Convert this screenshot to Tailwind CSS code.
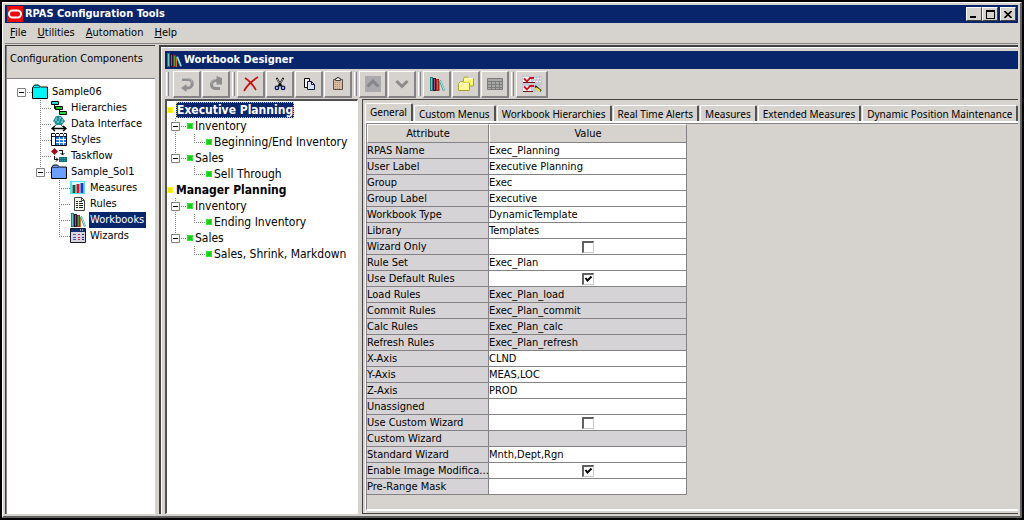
<!DOCTYPE html>
<html lang="en">
<head>
<meta charset="utf-8">
<title>RPAS Configuration Tools</title>
<script src="https://cdn.jsdelivr.net/npm/@tailwindcss/browser@4"></script>
</head>
<body class="bg-black font-['DejaVu_Sans_Condensed','DejaVu_Sans',sans-serif] text-[11px] leading-4 text-black">

<!-- Shared icons -->
<svg class="hidden" aria-hidden="true">
  <defs>
    <symbol id="t-line" viewBox="0 0 19 16"><path d="M8.5 0v16" stroke="#808080" stroke-dasharray="1 1"/></symbol>
    <symbol id="t-tee" viewBox="0 0 19 16"><path d="M8.5 0v16M8 8.5h11" stroke="#808080" stroke-dasharray="1 1" fill="none"/></symbol>
    <symbol id="t-end" viewBox="0 0 19 16"><path d="M8.5 0v8M8 8.5h11" stroke="#808080" stroke-dasharray="1 1" fill="none"/></symbol>
    <symbol id="t-box" viewBox="0 0 19 16"><path d="M4.5 4.5h8v8h-8z" fill="#fff" stroke="#808080"/><path d="M6 8.5h5" stroke="#000"/><path d="M14 8.5h5" stroke="#808080" stroke-dasharray="1 1"/></symbol>
    <symbol id="t-box-end" viewBox="0 0 19 16"><path d="M8.5 0v4" stroke="#808080" stroke-dasharray="1 1"/><path d="M4.5 4.5h8v8h-8z" fill="#fff" stroke="#808080"/><path d="M6 8.5h5" stroke="#000"/><path d="M14 8.5h5" stroke="#808080" stroke-dasharray="1 1"/></symbol>
    <symbol id="t-box-mid" viewBox="0 0 19 16"><path d="M8.5 0v16" stroke="#808080" stroke-dasharray="1 1"/><path d="M4.5 4.5h8v8h-8z" fill="#fff" stroke="#808080"/><path d="M6 8.5h5" stroke="#000"/><path d="M14 8.5h5" stroke="#808080" stroke-dasharray="1 1"/></symbol>
    <symbol id="n-green" viewBox="0 0 9 16"><path d="M1 5h6v6H1z" fill="#2cf02c"/><path d="M2 6h4v4H2z" fill="#1cc81c"/></symbol>
    <symbol id="n-yellow" viewBox="0 0 9 16"><path d="M0 5h6v6H0z" fill="#ffff30"/><path d="M1 6h4v4H1z" fill="#f0e800"/></symbol>
    <symbol id="i-books" viewBox="0 0 16 16">
      <path d="M1 1h3v14H1z" fill="#1f7f70"/><path d="M2 2h1v12H2z" fill="#5fd0b0"/>
      <path d="M4 2h3v13H4z" fill="#301040"/><path d="M5 3h1v11H5z" fill="#b040a0"/>
      <path d="M7 3h3v12H7z" fill="#a02818"/><path d="M8 4h1v10H8z" fill="#60a030"/>
      <path d="M10 5h1v10h-1z" fill="#e07030"/>
      <path d="M10 5l2-1 4 10-2 1z" fill="#3f9fa8"/><path d="M11.5 5l3.5 9" stroke="#b0f0e8"/>
    </symbol>
    <symbol id="i-folder-cyan" viewBox="0 0 16 16"><path d="M.5 14.500V3.500L2.500 1h4l2 2h7v11.500z" fill="#00f4f8" stroke="#000"/><path d="M1 3.500h7" stroke="#08777c"/></symbol>
    <symbol id="i-folder-blue" viewBox="0 0 16 16"><path d="M.5 14.500V3.500L2.500 1h4l2 2h7v11.500z" fill="#6ca0fc" stroke="#000"/><path d="M1 3.500h7" stroke="#28487c"/></symbol>
    <symbol id="i-hier" viewBox="0 0 16 16"><path d="M3.500 5v3.500H6M8.500 9v4H10" stroke="#000" fill="none"/><path d="M.5 1.500h7v3h-7z" fill="#30d8d8" stroke="#000"/><path d="M4.500 6.500h7v3h-7z" fill="#18c828" stroke="#000"/><path d="M8.500 11.500h7v3h-7z" fill="#20e030" stroke="#000"/></symbol>
    <symbol id="i-data" viewBox="0 0 16 16"><path d="M5 0h5l4 5-3 4H5L2 5z" fill="#208c98"/><path d="M5 2h1M8 2h2M4 4h2M8 4h1M11 4h1M3 6h1M6 6h2M10 6h2" stroke="#b0ecec"/><path d="M5 9l-3 3M10 9l3 3" stroke="#606060"/><path d="M1 12.500h14M4 10l-3 2.500L4 15M12 10l3 2.500L12 15" stroke="#000" fill="none" stroke-width="1.400"/></symbol>
    <symbol id="i-styles" viewBox="0 0 16 16"><path d="M.5 1.500h15v12H.5z" fill="#fff" stroke="#000"/><path d="M4 5h11v8H4z" fill="#2878e0"/><path d="M4.500 1v12M8.500 1v12M12.500 1v12M1 4.500h14M4 7.500h11M4 10.500h11" stroke="#fff"/><path d="M1 4.500h14M4.500 2v11" stroke="#101840"/><path d="M8.500 2v3M12.500 2v3" stroke="#555"/></symbol>
    <symbol id="i-task" viewBox="0 0 16 16"><path d="M3.500 0L7 3.500 3.500 7 0 3.500z" fill="#981018"/><path d="M8 2.500h3.500V7M9.500 5l2 2 2-2M3.500 8v3.500H7M5 9.500l2 2-2 2" stroke="#000" fill="none"/><path d="M8 9h8v5H8z" fill="#107078"/><path d="M9 10.500h6M9 12.500h6" stroke="#30a0a0" stroke-dasharray="1 1"/></symbol>
    <symbol id="i-meas" viewBox="0 0 16 16"><path d="M0 1h15v13H0z" fill="#58e0f0"/><path d="M2 2h12v11H2z" fill="#d8fcff"/><path d="M2.500 5h3v8h-3z" fill="#086048"/><path d="M6.500 4h3v9h-3z" fill="#c81828"/><path d="M10.500 3h3v10h-3z" fill="#2038c8"/></symbol>
    <symbol id="i-rules" viewBox="0 0 16 16"><path d="M4.500 1.500h7l3 3v10h-10z" fill="#f4f4ec" stroke="#444"/><path d="M11.500 1.500v3h3" fill="none" stroke="#444"/><path d="M6 5.500h2M9 5.500h3M6 7.500h2M9 7.500h4M6 9.500h2M9 9.500h4M6 11.500h2M9 11.500h4" stroke="#222"/></symbol>
    <symbol id="i-wiz" viewBox="0 0 16 16"><path d="M.5.500h15v14H.5z" fill="#d8d4e0" stroke="#181828"/><path d="M1 1h14v3H1z" fill="#103070"/><path d="M10 2h1M12 2h1" stroke="#fff"/><path d="M3 6.500h3M3 9.500h3M3 11.500h3" stroke="#4858c0"/><path d="M8 6.500h2M8 9.500h2M8 11.500h2" stroke="#b83050"/><path d="M12 6.500h2M12 9.500h2M12 11.500h2" stroke="#202080"/></symbol>
    <symbol id="i-undo" viewBox="0 0 16 16"><path d="M3 3.500h6a4 4 0 0 1 0 8.500H7" fill="none" stroke="#8f8f8f" stroke-width="3"/><path d="M7.500 8v8L2 12z" fill="#8f8f8f"/><path d="M3 2.500h6a4 4 0 0 1 4 4" fill="none" stroke="#b4b4b4"/></symbol>
    <symbol id="i-redo" viewBox="0 0 16 16"><path d="M10 4.500H7.500a4 4 0 0 0 0 8H12" fill="none" stroke="#8f8f8f" stroke-width="3"/><path d="M8.500 0v8.500H14V2z" fill="#8f8f8f"/><path d="M8 3.500a4 4 0 0 0-4.500 4" fill="none" stroke="#b4b4b4"/></symbol>
    <symbol id="i-del" viewBox="0 0 16 16"><path d="M2 2c5 3 8 7 11 12M15 1C9 5 4 9 1 15" fill="none" stroke="#c81010" stroke-width="1.700"/></symbol>
    <symbol id="i-cut" viewBox="0 0 16 16"><path d="M4 1l6 10M12 1L6 11" stroke="#000" stroke-width="2.200"/><path d="M4.500 2l3 5M11.500 2l-3 5" stroke="#fff" stroke-width=".8"/><circle cx="4.500" cy="12.500" r="2" fill="#b8bce8" stroke="#101858" stroke-width="1.500"/><circle cx="11.500" cy="12.500" r="2" fill="#b8bce8" stroke="#101858" stroke-width="1.500"/></symbol>
    <symbol id="i-copy" viewBox="0 0 16 16"><path d="M3.500 2.500h5v9h-5z" fill="#f4f4f8" stroke="#000"/><path d="M6.500 5.500h4l3 3v5h-7z" fill="#dce0f4" stroke="#101840"/><path d="M10.500 5.500v3h3" fill="none" stroke="#101840"/></symbol>
    <symbol id="i-paste" viewBox="0 0 16 16"><path d="M3.500 3.500h9v10h-9z" fill="#d8b8a0" stroke="#5c504c"/><path d="M5 6.500h6M5 8.500h6M5 10.500h6M5 12.500h6" stroke="#b09898" stroke-dasharray="1 1"/><path d="M5.500 4.500v-2h1.500v-1h2v1h1.500v2z" fill="#f0f0f0" stroke="#444"/></symbol>
    <symbol id="i-up" viewBox="0 0 16 16"><path d="M0 0h16v16H0z" fill="#aaaaae"/><path d="M2.500 10.500L8 5l5.500 5.500" fill="none" stroke="#868688" stroke-width="3"/></symbol>
    <symbol id="i-down" viewBox="0 0 16 16"><path d="M2.500 5L8 10.500 13.500 5" fill="none" stroke="#8c8c8c" stroke-width="3"/></symbol>
    <symbol id="i-folders" viewBox="0 0 16 16"><path d="M5.500 8V2.500l1-1.500h3l1 1.500h5V10h-10z" fill="#fff870" stroke="#b0a030"/><path d="M.5 14.500V7.500l2-2h3l1 1.500h5v7.500z" fill="#ffff98" stroke="#b0a030"/><path d="M6 4.500l3-2h6M1 9l3-1.500h7" fill="none" stroke="#ffffe0"/></symbol>
    <symbol id="i-grid" viewBox="0 0 16 16"><path d="M.5 2.500h15v11H.5z" fill="#a8a8a8" stroke="#7c7c7c"/><path d="M1 5.500h14M1 8.500h14M1 11.500h14M4.500 5v8M8.500 5v8M12.500 5v8" stroke="#7c7c7c"/></symbol>
    <symbol id="i-check" viewBox="0 0 20 16"><path d="M0 0h20v16H0z" fill="#c8c8d4"/><path d="M1 1h8v5H1zM1 10h8v5H1z" fill="#f4f4f4"/><path d="M12 2.500h7M11 5.500h8M11 10.500h3" stroke="#f4f4f4" stroke-dasharray="2 1"/><path d="M2 2.500l3 3 3-3.500 4 0M2 10.500l3 3 3-3.500 4 0" fill="none" stroke="#d01020" stroke-width="1.800"/><path d="M1 6.500h12M1 15.500h10" stroke="#701018"/><path d="M13 10l6 5" stroke="#202020" stroke-width="2"/><path d="M14 12l4 3" stroke="#f0e800" stroke-width="2"/></symbol>
  </defs>
</svg>

<div class="flex min-h-screen flex-col p-0.5">
<div class="flex grow flex-col border-t border-r-2 border-b-2 border-l border-t-white border-r-[#606060] border-b-[#606060] border-l-white bg-[#d6d3ce] p-0.5">

  <!-- Title bar -->
  <header class="flex h-[18px] items-center bg-[#08246b] pr-0.5 pl-0.5 text-white">
    <svg class="size-4" viewBox="0 0 16 16" aria-hidden="true"><path d="M0 0h16v16H0z" fill="#f00808"/><rect x="2" y="4.500" width="12" height="7" rx="3.500" fill="none" stroke="#fff" stroke-width="2"/></svg>
    <h1 class="ml-0.5 grow font-bold">RPAS Configuration Tools</h1>
    <div class="flex">
      <button aria-label="Minimize" class="flex h-3.5 w-4 items-end justify-start border border-t-white border-r-[#404040] border-b-[#404040] border-l-white bg-[#d6d3ce] pb-0.5 pl-[3px]"><span class="h-0.5 w-1.5 bg-black"></span></button>
      <button aria-label="Maximize" class="flex h-3.5 w-4 items-center justify-center border border-t-white border-r-[#404040] border-b-[#404040] border-l-white bg-[#d6d3ce]"><span class="h-[9px] w-[9px] border border-t-2 border-black"></span></button>
      <button aria-label="Close" class="ml-0.5 flex h-3.5 w-4 items-center justify-center border border-t-white border-r-[#404040] border-b-[#404040] border-l-white bg-[#d6d3ce]"><svg class="h-[7px] w-2" viewBox="0 0 8 7"><path d="M.5 0l7 7M7.500 0l-7 7" stroke="#000" stroke-width="1.600"/></svg></button>
    </div>
  </header>

  <!-- Menu bar -->
  <nav class="flex h-[21px] items-center gap-[11px] border-b border-[#848284] pl-[5px]">
    <button><u>F</u>ile</button>
    <button><u>U</u>tilities</button>
    <button><u>A</u>utomation</button>
    <button><u>H</u>elp</button>
  </nav>

  <div class="flex grow pt-px">
    <!-- Component tree -->
    <aside class="flex w-[150px] shrink-0 flex-col border-t border-l border-[#424142]">
      <h2 class="h-8 border-l border-[#848284] pt-[5px] pl-[3px] whitespace-nowrap">Configuration Components</h2>
      <ul class="grow border-t border-l border-[#848284] bg-white pt-[5px] pl-1.5">
        <li>
          <div class="flex h-4 items-center"><button aria-label="Collapse Sample06"><svg class="block h-4 w-[19px]"><use href="#t-box"/></svg></button><svg class="size-4"><use href="#i-folder-cyan"/></svg><span class="ml-[3px] px-px">Sample06</span></div>
          <ul>
            <li class="flex h-4 items-center pl-[19px]"><svg class="h-4 w-[19px]"><use href="#t-tee"/></svg><svg class="size-4"><use href="#i-hier"/></svg><span class="ml-[3px] px-px">Hierarchies</span></li>
            <li class="flex h-4 items-center pl-[19px]"><svg class="h-4 w-[19px]"><use href="#t-tee"/></svg><svg class="size-4"><use href="#i-data"/></svg><span class="ml-[3px] px-px whitespace-nowrap">Data Interface</span></li>
            <li class="flex h-4 items-center pl-[19px]"><svg class="h-4 w-[19px]"><use href="#t-tee"/></svg><svg class="size-4"><use href="#i-styles"/></svg><span class="ml-[3px] px-px">Styles</span></li>
            <li class="flex h-4 items-center pl-[19px]"><svg class="h-4 w-[19px]"><use href="#t-tee"/></svg><svg class="size-4"><use href="#i-task"/></svg><span class="ml-[3px] px-px">Taskflow</span></li>
            <li>
              <div class="flex h-4 items-center pl-[19px]"><button aria-label="Collapse Sample_Sol1"><svg class="block h-4 w-[19px]"><use href="#t-box-end"/></svg></button><svg class="size-4"><use href="#i-folder-blue"/></svg><span class="ml-[3px] px-px">Sample_Sol1</span></div>
              <ul>
                <li class="flex h-4 items-center pl-[38px]"><svg class="h-4 w-[19px]"><use href="#t-tee"/></svg><svg class="size-4"><use href="#i-meas"/></svg><span class="ml-[3px] px-px">Measures</span></li>
                <li class="flex h-4 items-center pl-[38px]"><svg class="h-4 w-[19px]"><use href="#t-tee"/></svg><svg class="size-4"><use href="#i-rules"/></svg><span class="ml-[3px] px-px">Rules</span></li>
                <li class="flex h-4 items-center pl-[38px]"><svg class="h-4 w-[19px]"><use href="#t-tee"/></svg><svg class="size-4"><use href="#i-books"/></svg><span class="ml-[3px] bg-[#08246b] pr-0.5 pl-px text-white">Workbooks</span></li>
                <li class="flex h-4 items-center pl-[38px]"><svg class="h-4 w-[19px]"><use href="#t-end"/></svg><svg class="size-4"><use href="#i-wiz"/></svg><span class="ml-[3px] px-px">Wizards</span></li>
              </ul>
            </li>
          </ul>
        </li>
      </ul>
    </aside>

    <!-- Workbook designer -->
    <main class="ml-1 flex min-w-0 grow flex-col border-t-2 border-l-2 border-[#424142]">
      <div class="flex grow flex-col border-t border-l border-white pt-[3px] pl-[3px]">
        <div class="flex h-[18px] shrink-0 items-center bg-[#08246b] pl-px text-white">
          <svg class="size-4" aria-hidden="true"><use href="#i-books"/></svg>
          <h2 class="ml-0.5 font-bold">Workbook Designer</h2>
        </div>

        <div class="flex h-[30px] shrink-0 items-center gap-px" role="toolbar">
          <span class="mr-[3px] ml-px h-6 w-[3px] border-r border-l border-r-[#848284] border-l-white"></span>
          <button aria-label="Undo" disabled class="flex h-[27px] w-7 items-center justify-center border-t border-r-2 border-b-2 border-l border-t-white border-r-[#848284] border-b-[#848284] border-l-white"><svg class="size-4"><use href="#i-undo"/></svg></button>
          <button aria-label="Redo" disabled class="flex h-[27px] w-7 items-center justify-center border-t border-r-2 border-b-2 border-l border-t-white border-r-[#848284] border-b-[#848284] border-l-white"><svg class="size-4"><use href="#i-redo"/></svg></button>
          <span class="mx-px h-6 w-[3px] border-r border-l border-r-[#848284] border-l-white"></span>
          <button aria-label="Delete" class="flex h-[27px] w-7 items-center justify-center border-t border-r-2 border-b-2 border-l border-t-white border-r-[#848284] border-b-[#848284] border-l-white"><svg class="size-4"><use href="#i-del"/></svg></button>
          <button aria-label="Cut" class="flex h-[27px] w-7 items-center justify-center border-t border-r-2 border-b-2 border-l border-t-white border-r-[#848284] border-b-[#848284] border-l-white"><svg class="size-3.5"><use href="#i-cut"/></svg></button>
          <button aria-label="Copy" class="flex h-[27px] w-7 items-center justify-center border-t border-r-2 border-b-2 border-l border-t-white border-r-[#848284] border-b-[#848284] border-l-white"><svg class="size-4"><use href="#i-copy"/></svg></button>
          <button aria-label="Paste" class="flex h-[27px] w-7 items-center justify-center border-t border-r-2 border-b-2 border-l border-t-white border-r-[#848284] border-b-[#848284] border-l-white"><svg class="size-4"><use href="#i-paste"/></svg></button>
          <span class="mx-px h-6 w-[3px] border-r border-l border-r-[#848284] border-l-white"></span>
          <button aria-label="Move up" disabled class="flex h-[27px] w-7 items-center justify-center border-t border-r-2 border-b-2 border-l border-t-white border-r-[#848284] border-b-[#848284] border-l-white"><svg class="size-4"><use href="#i-up"/></svg></button>
          <button aria-label="Move down" disabled class="flex h-[27px] w-7 items-center justify-center border-t border-r-2 border-b-2 border-l border-t-white border-r-[#848284] border-b-[#848284] border-l-white"><svg class="size-4"><use href="#i-down"/></svg></button>
          <span class="mx-px h-6 w-[3px] border-r border-l border-r-[#848284] border-l-white"></span>
          <button aria-label="New workbook" class="flex h-[27px] w-7 items-center justify-center border-t border-r-2 border-b-2 border-l border-t-white border-r-[#848284] border-b-[#848284] border-l-white"><svg class="size-4"><use href="#i-books"/></svg></button>
          <button aria-label="New tab" class="flex h-[27px] w-7 items-center justify-center border-t border-r-2 border-b-2 border-l border-t-white border-r-[#848284] border-b-[#848284] border-l-white"><svg class="size-4"><use href="#i-folders"/></svg></button>
          <button aria-label="New worksheet" disabled class="flex h-[27px] w-7 items-center justify-center border-t border-r-2 border-b-2 border-l border-t-white border-r-[#848284] border-b-[#848284] border-l-white"><svg class="size-4"><use href="#i-grid"/></svg></button>
          <span class="mx-px h-6 w-[3px] border-r border-l border-r-[#848284] border-l-white"></span>
          <button aria-label="Validate" class="flex h-[27px] w-8 items-center justify-center border-t border-r-2 border-b-2 border-l border-t-white border-r-[#848284] border-b-[#848284] border-l-white"><svg class="h-4 w-5"><use href="#i-check"/></svg></button>
        </div>

        <div class="flex grow">
          <!-- Workbook tree -->
          <div class="flex w-[193px] shrink-0 border-t-2 border-r border-b border-l-2 border-t-[#525152] border-r-white border-b-white border-l-[#525152] bg-white pt-px text-xs leading-4">
            <ul class="whitespace-nowrap">
              <li>
                <div class="flex h-4 items-center"><svg class="h-4 w-[9px]"><use href="#n-yellow"/></svg><span class="h-4 border border-dotted border-[#d8c878] bg-[#08246b] leading-[14px] font-bold text-white">Executive Planning</span></div>
                <ul>
                  <li class="flex h-4 items-center"><button aria-label="Collapse Inventory"><svg class="block h-4 w-[19px]"><use href="#t-box-mid"/></svg></button><svg class="h-4 w-[9px]"><use href="#n-green"/></svg><span>Inventory</span></li>
                  <li class="flex h-4 items-center"><svg class="h-4 w-[19px]"><use href="#t-line"/></svg><svg class="h-4 w-[19px]"><use href="#t-end"/></svg><svg class="h-4 w-[9px]"><use href="#n-green"/></svg><span>Beginning/End Inventory</span></li>
                  <li class="flex h-4 items-center"><button aria-label="Collapse Sales"><svg class="block h-4 w-[19px]"><use href="#t-box-end"/></svg></button><svg class="h-4 w-[9px]"><use href="#n-green"/></svg><span>Sales</span></li>
                  <li class="flex h-4 items-center pl-[19px]"><svg class="h-4 w-[19px]"><use href="#t-end"/></svg><svg class="h-4 w-[9px]"><use href="#n-green"/></svg><span>Sell Through</span></li>
                </ul>
              </li>
              <li>
                <div class="flex h-4 items-center"><svg class="h-4 w-[9px]"><use href="#n-yellow"/></svg><span class="font-bold">Manager Planning</span></div>
                <ul>
                  <li class="flex h-4 items-center"><button aria-label="Collapse Inventory"><svg class="block h-4 w-[19px]"><use href="#t-box-mid"/></svg></button><svg class="h-4 w-[9px]"><use href="#n-green"/></svg><span>Inventory</span></li>
                  <li class="flex h-4 items-center"><svg class="h-4 w-[19px]"><use href="#t-line"/></svg><svg class="h-4 w-[19px]"><use href="#t-end"/></svg><svg class="h-4 w-[9px]"><use href="#n-green"/></svg><span>Ending Inventory</span></li>
                  <li class="flex h-4 items-center"><button aria-label="Collapse Sales"><svg class="block h-4 w-[19px]"><use href="#t-box-end"/></svg></button><svg class="h-4 w-[9px]"><use href="#n-green"/></svg><span>Sales</span></li>
                  <li class="flex h-4 items-center pl-[19px]"><svg class="h-4 w-[19px]"><use href="#t-end"/></svg><svg class="h-4 w-[9px]"><use href="#n-green"/></svg><span>Sales, Shrink, Markdown</span></li>
                </ul>
              </li>
            </ul>
          </div>

          <!-- Properties -->
          <section class="ml-1 flex min-w-0 grow flex-col border-t border-b border-l border-[#424142] pt-[3px]">
            <div role="tablist" class="flex items-end gap-px pl-0.5 font-['Noto_Sans','DejaVu_Sans_Condensed',sans-serif] text-[10px] whitespace-nowrap">
              <button role="tab" aria-selected="true" class="h-[18px] rounded-t-xs border-t border-r-2 border-l border-t-white border-r-[#525152] border-l-white px-1 pb-0.5">General</button>
              <button role="tab" class="h-4 rounded-t-xs border-t border-r-2 border-l border-t-white border-r-[#525152] border-l-white px-1">Custom Menus</button>
              <button role="tab" class="h-4 rounded-t-xs border-t border-r-2 border-l border-t-white border-r-[#525152] border-l-white px-1">Workbook Hierarchies</button>
              <button role="tab" class="h-4 rounded-t-xs border-t border-r-2 border-l border-t-white border-r-[#525152] border-l-white px-1">Real Time Alerts</button>
              <button role="tab" class="h-4 rounded-t-xs border-t border-r-2 border-l border-t-white border-r-[#525152] border-l-white px-1">Measures</button>
              <button role="tab" class="h-4 rounded-t-xs border-t border-r-2 border-l border-t-white border-r-[#525152] border-l-white px-1">Extended Measures</button>
              <button role="tab" class="h-4 rounded-t-xs border-t border-r-2 border-l border-t-white border-r-[#525152] border-l-white px-1">Dynamic Position Maintenance</button>
            </div>
            <div role="tabpanel" class="ml-0.5 flex grow flex-col border-t-2 border-l border-white">
              <div class="mb-0.5 grow border-t border-b-2 border-l border-t-[#848284] border-b-white border-l-[#848284]">
                <table class="w-80 table-fixed border-separate border-spacing-0">
                  <colgroup><col class="w-[122px]"><col></colgroup>
                  <thead>
                    <tr class="h-[19px]">
                      <th class="border-t border-r border-b border-l border-t-white border-r-[#848284] border-b-[#848284] border-l-white p-0 font-normal">Attribute</th>
                      <th class="border-t border-r border-b border-l border-t-white border-r-[#848284] border-b-[#848284] border-l-white p-0 font-normal">Value</th>
                    </tr>
                  </thead>
                  <tbody class="[&_td]:h-4 [&_td]:truncate [&_td]:border-r [&_td]:border-b [&_td]:border-[#848284] [&_td]:bg-white [&_td]:p-0 [&_td]:leading-[15px] [&_th]:h-4 [&_th]:whitespace-nowrap [&_th]:border-r [&_th]:border-b [&_th]:border-[#848284] [&_th]:bg-[#d6d3d6] [&_th]:p-0 [&_th]:text-left [&_th]:leading-[15px] [&_th]:font-normal">
                    <tr><th>RPAS Name</th><td>Exec_Planning</td></tr>
                    <tr><th>User Label</th><td>Executive Planning</td></tr>
                    <tr><th>Group</th><td>Exec</td></tr>
                    <tr><th>Group Label</th><td>Executive</td></tr>
                    <tr><th>Workbook Type</th><td>DynamicTemplate</td></tr>
                    <tr><th>Library</th><td>Templates</td></tr>
                    <tr><th><label for="wo">Wizard Only</label></th><td><span class="grid justify-center"><input id="wo" type="checkbox" class="peer col-start-1 row-start-1 size-3 appearance-none border-t-2 border-r border-b border-l-2 border-t-[#606060] border-r-[#c8c8c8] border-b-[#c8c8c8] border-l-[#606060] bg-white"><svg class="invisible col-start-1 row-start-1 size-3 peer-checked:visible" viewBox="0 0 12 12"><path d="M3.500 5l2 2.500 4-4" fill="none" stroke="#000" stroke-width="2"/></svg></span></td></tr>
                    <tr><th>Rule Set</th><td>Exec_Plan</td></tr>
                    <tr><th><label for="dr">Use Default Rules</label></th><td><span class="grid justify-center"><input id="dr" type="checkbox" checked class="peer col-start-1 row-start-1 size-3 appearance-none border-t-2 border-r border-b border-l-2 border-t-[#606060] border-r-[#c8c8c8] border-b-[#c8c8c8] border-l-[#606060] bg-white"><svg class="invisible col-start-1 row-start-1 size-3 peer-checked:visible" viewBox="0 0 12 12"><path d="M3.500 5l2 2.500 4-4" fill="none" stroke="#000" stroke-width="2"/></svg></span></td></tr>
                    <tr class="[&>td]:bg-[#d6d3d6]"><th>Load Rules</th><td>Exec_Plan_load</td></tr>
                    <tr class="[&>td]:bg-[#d6d3d6]"><th>Commit Rules</th><td>Exec_Plan_commit</td></tr>
                    <tr class="[&>td]:bg-[#d6d3d6]"><th>Calc Rules</th><td>Exec_Plan_calc</td></tr>
                    <tr class="[&>td]:bg-[#d6d3d6]"><th>Refresh Rules</th><td>Exec_Plan_refresh</td></tr>
                    <tr><th>X-Axis</th><td>CLND</td></tr>
                    <tr><th>Y-Axis</th><td>MEAS,LOC</td></tr>
                    <tr><th>Z-Axis</th><td>PROD</td></tr>
                    <tr><th>Unassigned</th><td></td></tr>
                    <tr><th><label for="cw">Use Custom Wizard</label></th><td><span class="grid justify-center"><input id="cw" type="checkbox" class="peer col-start-1 row-start-1 size-3 appearance-none border-t-2 border-r border-b border-l-2 border-t-[#606060] border-r-[#c8c8c8] border-b-[#c8c8c8] border-l-[#606060] bg-white"><svg class="invisible col-start-1 row-start-1 size-3 peer-checked:visible" viewBox="0 0 12 12"><path d="M3.500 5l2 2.500 4-4" fill="none" stroke="#000" stroke-width="2"/></svg></span></td></tr>
                    <tr class="[&>td]:bg-[#d6d3d6]"><th>Custom Wizard</th><td></td></tr>
                    <tr><th>Standard Wizard</th><td>Mnth,Dept,Rgn</td></tr>
                    <tr><th><label for="im">Enable Image Modifica...</label></th><td><span class="grid justify-center"><input id="im" type="checkbox" checked class="peer col-start-1 row-start-1 size-3 appearance-none border-t-2 border-r border-b border-l-2 border-t-[#606060] border-r-[#c8c8c8] border-b-[#c8c8c8] border-l-[#606060] bg-white"><svg class="invisible col-start-1 row-start-1 size-3 peer-checked:visible" viewBox="0 0 12 12"><path d="M3.500 5l2 2.500 4-4" fill="none" stroke="#000" stroke-width="2"/></svg></span></td></tr>
                    <tr><th>Pre-Range Mask</th><td></td></tr>
                  </tbody>
                </table>
              </div>
            </div>
          </section>
        </div>
      </div>
    </main>
  </div>
</div>
</div>
</body>
</html>
